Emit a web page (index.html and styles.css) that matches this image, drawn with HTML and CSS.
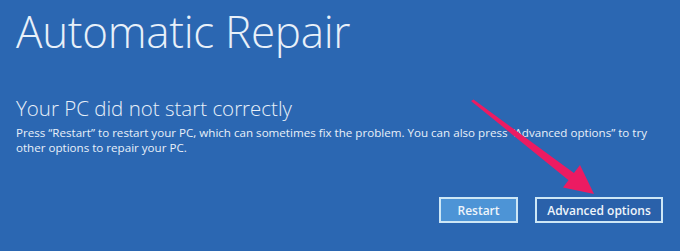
FILE: index.html
```html
<!DOCTYPE html>
<html lang="en">
<head>
<meta charset="utf-8">
<title>Automatic Repair</title>
<link rel="stylesheet" href="styles.css">
</head>
<body>
<main class="screen">
  <h1 class="title">Automatic Repair</h1>
  <h2 class="subtitle">Your PC did not start correctly</h2>
  <p class="message">Press “Restart” to restart your PC, which can sometimes fix the problem. You can also press “Advanced options” to try other options to repair your PC.</p>
  <div class="actions">
    <button class="btn btn-primary" type="button">Restart</button>
    <button class="btn btn-secondary" type="button">Advanced options</button>
  </div>
  <svg class="arrow" width="680" height="251" viewBox="0 0 680 251" aria-hidden="true">
    <polygon points="471,101 473.5,99.5 578,176 572,183" fill="#ec1b62"/>
    <polygon points="594,194 563,187.5 580,165" fill="#ec1b62"/>
  </svg>
</main>
</body>
</html>
```
FILE: styles.css
```css
html, body {
  margin: 0;
  padding: 0;
}
body {
  background: #2b67b2;
  width: 680px;
  height: 251px;
  overflow: hidden;
}
.screen {
  position: relative;
  width: 680px;
  height: 251px;
  box-sizing: border-box;
  padding: 3px 17px 0 16px;
  color: #e8f0f9;
  font-family: "Open Sans", "Noto Sans", sans-serif;
}
.title {
  margin: 0;
  font-size: 44px;
  font-weight: 300;
  line-height: 56px;
  letter-spacing: -0.3px;
}
.subtitle {
  margin: 37px 0 0;
  font-size: 20.5px;
  font-weight: 300;
  line-height: 24px;
}
.message {
  margin: 5px 0 0;
  font-size: 11.6px;
  line-height: 15px;
  max-width: 642px;
}
.actions {
  display: flex;
  justify-content: flex-end;
  gap: 17px;
  margin-top: 42px;
}
.btn {
  box-sizing: border-box;
  height: 26px;
  border: 2px solid #cde7f6;
  color: #eef5fb;
  font-family: "Open Sans", "Noto Sans", sans-serif;
  font-size: 12px;
  font-weight: 600;
  padding: 0;
}
.btn-primary {
  width: 79px;
  background: #4d94d6;
}
.btn-secondary {
  width: 128px;
  background: #2a61aa;
}
.arrow {
  position: absolute;
  left: 0;
  top: 0;
}
```
